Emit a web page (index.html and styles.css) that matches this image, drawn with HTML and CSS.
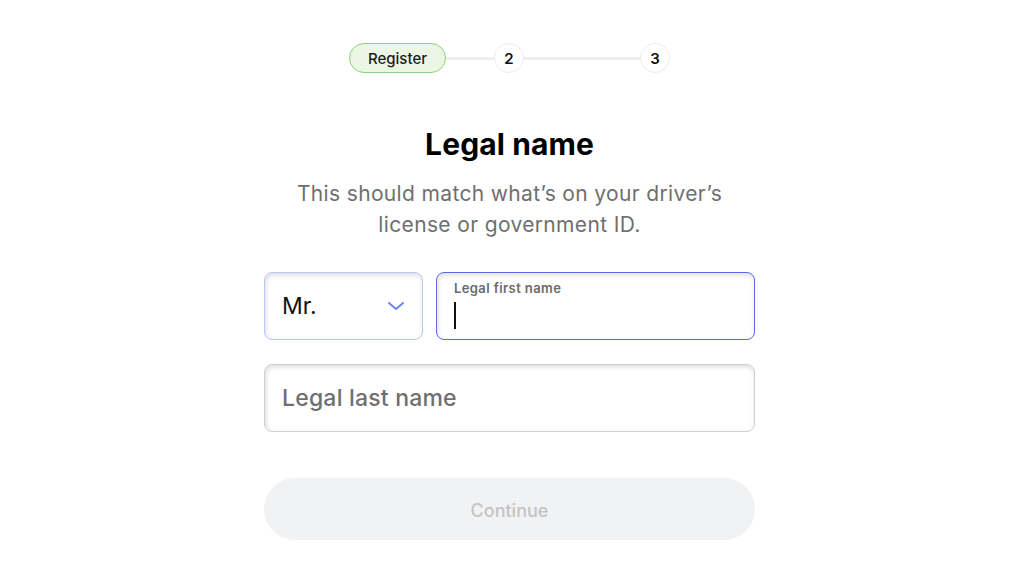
FILE: index.html
```html
<!DOCTYPE html>
<html lang="en">
<head>
<meta charset="utf-8">
<title>Legal name</title>
<link rel="stylesheet" href="styles.css">
</head>
<body>
<main class="page">
  <nav class="stepper">
    <span class="step-pill">Register</span>
    <span class="step-line short"></span>
    <span class="step-dot">2</span>
    <span class="step-line long"></span>
    <span class="step-dot">3</span>
  </nav>
  <h1 class="title">Legal name</h1>
  <p class="subtitle">This should match what’s on your driver’s<br>license or government ID.</p>
  <form class="form">
    <div class="row">
      <div class="field select">
        <span class="select-value">Mr.</span>
        <svg class="chev" width="18" height="10" viewBox="0 0 18 10"><path d="M2 2 L9 8 L16 2" fill="none" stroke="#6e7ff0" stroke-width="2" stroke-linecap="round" stroke-linejoin="round"/></svg>
      </div>
      <div class="field first focused">
        <span class="label-small">Legal first name</span>
        <span class="caret"></span>
      </div>
    </div>
    <div class="field last">
      <span class="placeholder">Legal last name</span>
    </div>
    <button type="button" class="continue">Continue</button>
  </form>
</main>
</body>
</html>
```
FILE: styles.css
```css
* { box-sizing: border-box; }
html, body { margin: 0; padding: 0; background: #fff; }
body { font-family: Inter, "Liberation Sans", sans-serif; color: #111; }
.page { width: 491px; margin-left: 264px; display: flex; flex-direction: column; align-items: center; padding-top: 43px; }
.stepper { display: flex; align-items: center; }
.step-pill { height: 30px; padding: 0 18px; border: 1.5px solid #8fd17a; background: #ebf6e5; border-radius: 15px; font-size: 15px; font-weight: 500; display: flex; align-items: center; color: #1c1c1c; }
.step-line { height: 3px; background: #eeeeee; }
.step-line.short { width: 48px; }
.step-line.long { width: 116px; }
.step-dot { width: 30px; height: 30px; border-radius: 50%; border: 1.5px solid #ececec; display: flex; align-items: center; justify-content: center; font-size: 15px; font-weight: 600; color: #111; }
.title { margin: 53px 0 0; font-size: 30px; font-weight: 700; line-height: 36px; color: #000; letter-spacing: 0.1px; }
.subtitle { margin: 16px 0 0; text-align: center; font-size: 21px; line-height: 31px; color: #6f6f6f; letter-spacing: 0.35px; }
.form { width: 100%; margin-top: 32px; display: flex; flex-direction: column; }
.row { display: flex; gap: 13px; }
.field { height: 68px; border-radius: 8px; border: 1px solid #cfcfcf; background: #fff; box-shadow: inset 1px 2px 5px rgba(0,0,0,0.14); display: flex; align-items: center; padding: 0 17px; }
.select { width: 159px; border-color: #bcc4f6; justify-content: space-between; padding-right: 17px; }
.select-value { font-size: 23px; color: #111; }
.first { flex: 1; border-color: #5a6be6; flex-direction: column; align-items: flex-start; justify-content: flex-start; padding-top: 7px; }
.label-small { font-size: 13px; font-weight: 600; color: #6a6a6a; line-height: 16px; letter-spacing: 0.4px; }
.caret { display: block; width: 2px; height: 27px; background: #111; margin-top: 6px; }
.last { margin-top: 24px; }
.placeholder { font-size: 23px; font-weight: 500; color: #6f6f6f; letter-spacing: 0.2px; }
.continue { margin-top: 46px; height: 62px; padding-top: 3px; border: none; border-radius: 31px; background: #f1f2f4; color: #c4c4c4; font-family: inherit; font-size: 18px; font-weight: 500; width: 100%; }
```
